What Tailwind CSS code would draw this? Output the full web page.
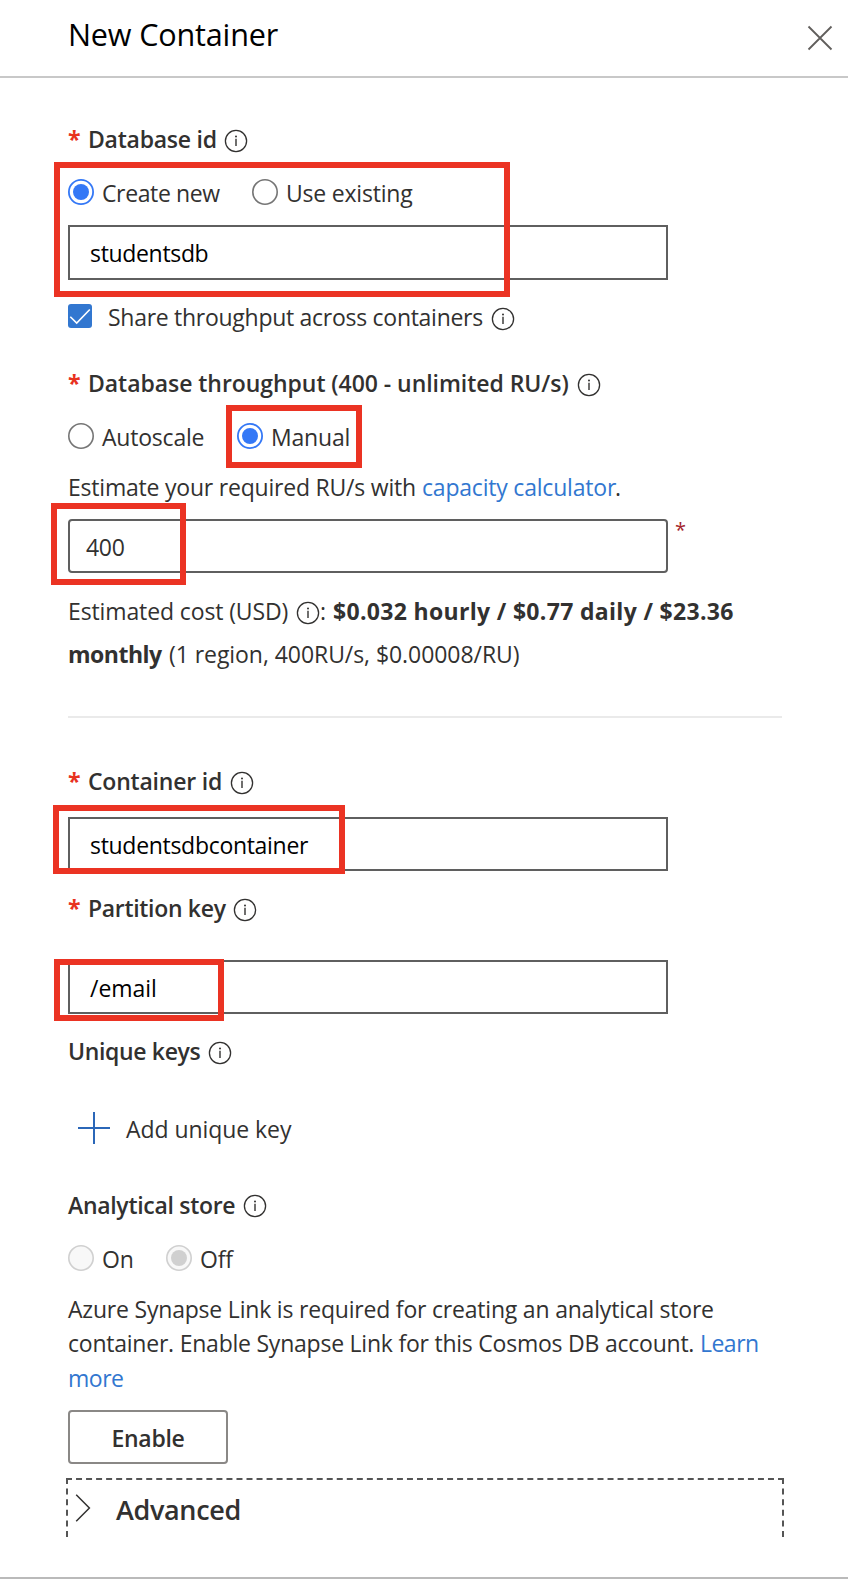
<!DOCTYPE html>
<html lang="en">
<head>
<meta charset="utf-8">
<title>New Container</title>
<script src="https://cdn.jsdelivr.net/npm/@tailwindcss/browser@4"></script>
</head>
<body class="bg-white font-['Open_Sans','Noto_Sans',sans-serif] text-[23px] leading-[32px] tracking-[-0.21px] text-[#323130]">
<svg class="hidden">
  <symbol id="info" viewBox="0 0 24 24">
    <circle cx="12" cy="12" r="10.6" fill="none" stroke="#323130" stroke-width="1.3"/>
    <path d="M12 9.8V17" stroke="#323130" stroke-width="1.4"/>
    <circle cx="12" cy="7.4" r="1" fill="#323130"/>
  </symbol>
  <symbol id="radio-on" viewBox="0 0 26 26">
    <circle cx="13" cy="13" r="12.1" fill="#fff" stroke="#3478f6" stroke-width="1.8"/>
    <circle cx="13" cy="13" r="8" fill="#3478f6"/>
  </symbol>
  <symbol id="radio-off" viewBox="0 0 26 26">
    <circle cx="13" cy="13" r="12.2" fill="#fff" stroke="#767676" stroke-width="1.6"/>
  </symbol>
</svg>

<div class="h-[1579px] border-b-2 border-[#bababa]">
  <header class="flex h-[78px] items-center justify-between border-b-2 border-[#c8c8c8] pr-[15px] pl-[68px]">
    <h1 class="-mt-2 text-[30.6px] leading-[40px] tracking-[-0.18px] text-black">New Container</h1>
    <svg class="size-[26px]" viewBox="0 0 26 26"><path d="M1.5 1.5 24.5 24.5M24.5 1.5 1.5 24.5" stroke="#605e5c" stroke-width="1.8"/></svg>
  </header>

  <main class="flex flex-col pr-[66px] pl-[68px]">
    <div class="mt-[45px] flex h-8 items-center font-semibold tracking-[-0.25px]">
      <span class="w-5 font-bold text-[#e8321f]">*</span>
      <span class="w-[136px] whitespace-nowrap">Database id</span>
      <svg class="mt-1 size-6"><use href="#info"/></svg>
    </div>

    <section class="relative mt-[22px]">
      <div class="flex h-8 items-center">
        <svg class="-mt-0.5 size-[26px]"><use href="#radio-on"/></svg>
        <span class="ml-2 w-[150px] whitespace-nowrap tracking-[-0.38px]">Create new</span>
        <svg class="-mt-0.5 size-[26px]"><use href="#radio-off"/></svg>
        <span class="ml-2 whitespace-nowrap">Use existing</span>
      </div>
      <div class="mt-4 flex h-[55px] w-[600px] items-center border-2 border-[#5f5f5f] pl-5 text-black tracking-[-0.33px]">studentsdb</div>
      <div class="absolute -top-[15px] -left-[14px] h-[135px] w-[456px] border-6 border-[#eb3323]"></div>
    </section>

    <div class="mt-5 flex h-8 items-center">
      <svg class="size-6" viewBox="0 0 24 24"><rect width="24" height="24" rx="3" fill="#3277d0"/><path d="M2.3 12.7 8.7 19 21.8 5.5" fill="none" stroke="#fff" stroke-width="1.6"/></svg>
      <span class="ml-4 w-[383px] whitespace-nowrap pt-0.5 tracking-[-0.28px]">Share throughput across containers</span>
      <svg class="mt-1.5 size-6"><use href="#info"/></svg>
    </div>

    <div class="mt-[35px] flex h-8 items-center font-semibold tracking-[-0.05px]">
      <span class="w-5 font-bold text-[#e8321f]">*</span>
      <span class="w-[489px] whitespace-nowrap">Database throughput (400 - unlimited RU/s)</span>
      <svg class="mt-1 size-6"><use href="#info"/></svg>
    </div>
    <div class="mt-[22px] flex h-8 items-center">
      <svg class="-mt-0.5 size-[26px]"><use href="#radio-off"/></svg>
      <span class="ml-2 w-[135px] whitespace-nowrap">Autoscale</span>
      <div class="relative flex items-center">
        <svg class="-mt-0.5 size-[26px]"><use href="#radio-on"/></svg>
        <span class="ml-2 whitespace-nowrap tracking-[-0.2px]">Manual</span>
        <div class="absolute -top-4 -left-[11px] h-[63px] w-[136px] border-6 border-[#eb3323]"></div>
      </div>
    </div>

    <p class="mt-[18px] flex h-8 whitespace-nowrap">
      <span class="w-[354px]">Estimate your required RU/s with</span>
      <a class="w-[193px] tracking-[-0.2px] text-[#3277d0]">capacity calculator</a><span>.</span>
    </p>
    <div class="relative mt-4 flex h-[54px]">
      <div class="flex w-[600px] items-center rounded-[4px] border-2 border-[#5f5f5f] pt-0.5 pl-4 tracking-[-0.3px]">400</div>
      <span class="-mt-[5px] ml-[7px] text-[20px] text-[#a4262c]">*</span>
      <div class="absolute -top-4 -left-[17px] h-[82px] w-[135px] border-6 border-[#eb3323]"></div>
    </div>

    <div class="mt-[17px] whitespace-nowrap leading-[43px]">
      <div class="flex h-[43px] items-center">
        <span class="w-[228px] tracking-[-0.12px]">Estimated cost (USD)</span>
        <svg class="mt-[3px] size-6"><use href="#info"/></svg>
        <span class="w-[13px]">:</span>
        <b class="tracking-[0.32px]">$0.032 hourly / $0.77 daily / $23.36</b>
      </div>
      <div class="flex h-[43px] items-center">
        <b class="w-[101px] tracking-[-0.5px]">monthly</b>
        <span class="tracking-[-0.06px]">(1 region, 400RU/s, $0.00008/RU)</span>
      </div>
    </div>

    <hr class="mt-10 border-t-2 border-[#eaeaea]">

    <div class="mt-[47px] flex h-8 items-center font-semibold">
      <span class="w-5 font-bold text-[#e8321f]">*</span>
      <span class="w-[141.5px] whitespace-nowrap">Container id</span>
      <svg class="mt-[3px] size-6"><use href="#info"/></svg>
    </div>
    <div class="relative mt-5 flex h-[54px] w-[600px] items-center border-2 border-[#5f5f5f] pt-0.5 pl-5 text-black tracking-[-0.3px]">
      studentsdbcontainer
      <div class="absolute -top-[14px] -left-[17px] h-[69px] w-[292px] border-6 border-[#eb3323]"></div>
    </div>

    <div class="mt-[21px] flex h-8 items-center font-semibold tracking-[-0.32px]">
      <span class="w-5 font-bold text-[#e8321f]">*</span>
      <span class="w-[145px] whitespace-nowrap">Partition key</span>
      <svg class="mt-1 size-6"><use href="#info"/></svg>
    </div>
    <div class="relative mt-9 flex h-[54px] w-[600px] items-center border-2 border-[#5f5f5f] pt-0.5 pl-5 text-black tracking-[-0.05px]">
      /email
      <div class="absolute -top-[3px] -left-4 h-[62px] w-[170px] border-6 border-[#eb3323]"></div>
    </div>

    <div class="mt-[21px] flex h-8 items-center font-semibold tracking-[-0.35px]">
      <span class="w-[140px] whitespace-nowrap">Unique keys</span>
      <svg class="mt-1 size-6"><use href="#info"/></svg>
    </div>
    <div class="mt-[45px] flex h-8 items-center pl-[10px]">
      <svg class="size-8" viewBox="0 0 32 32"><path d="M16 0V32M0 16H32" stroke="#2b67b8" stroke-width="2"/></svg>
      <span class="ml-4 pt-0.5 tracking-[-0.06px]">Add unique key</span>
    </div>

    <div class="mt-[45px] flex h-8 items-center font-semibold tracking-[-0.3px]">
      <span class="w-[175px] whitespace-nowrap">Analytical store</span>
      <svg class="mt-0.5 size-6"><use href="#info"/></svg>
    </div>
    <div class="mt-[21px] flex h-8 items-center">
      <svg class="size-[26px]" viewBox="0 0 26 26"><circle cx="13" cy="13" r="12.2" fill="#f8f8f8" stroke="#d0d0d0" stroke-width="1.6"/></svg>
      <span class="ml-2 w-16 pt-0.5">On</span>
      <svg class="size-[26px]" viewBox="0 0 26 26"><circle cx="13" cy="13" r="12.2" fill="#f8f8f8" stroke="#d0d0d0" stroke-width="1.6"/><circle cx="13" cy="13" r="8" fill="#d0d0d0"/></svg>
      <span class="ml-2 pt-0.5">Off</span>
    </div>

    <p class="mt-[18px] h-[103px] whitespace-nowrap leading-[34.4px] tracking-[-0.2px]">Azure Synapse Link is required for creating an analytical store<br><span class="tracking-[-0.23px]">container. Enable Synapse Link for this Cosmos DB account.</span> <a class="tracking-[-0.5px] text-[#3277d0]">Learn<br>more</a></p>

    <button class="mt-[15px] h-[54px] w-40 rounded-[4px] border-2 border-[#8a8886] pt-px font-semibold tracking-[-0.3px]">Enable</button>

    <div class="-mx-0.5 mt-[14px] flex h-[59px] items-center border-2 border-b-0 border-dashed border-[#555] pl-[7px]">
      <svg class="-mt-0.5 h-7 w-4" viewBox="0 0 16 28"><path d="M1.2 .8 14.4 14 1.2 27.2" fill="none" stroke="#323130" stroke-width="1.5"/></svg>
      <span class="ml-[25px] pt-0.5 text-[27px] font-semibold tracking-[-0.35px]">Advanced</span>
    </div>
  </main>
</div>
</body>
</html>
